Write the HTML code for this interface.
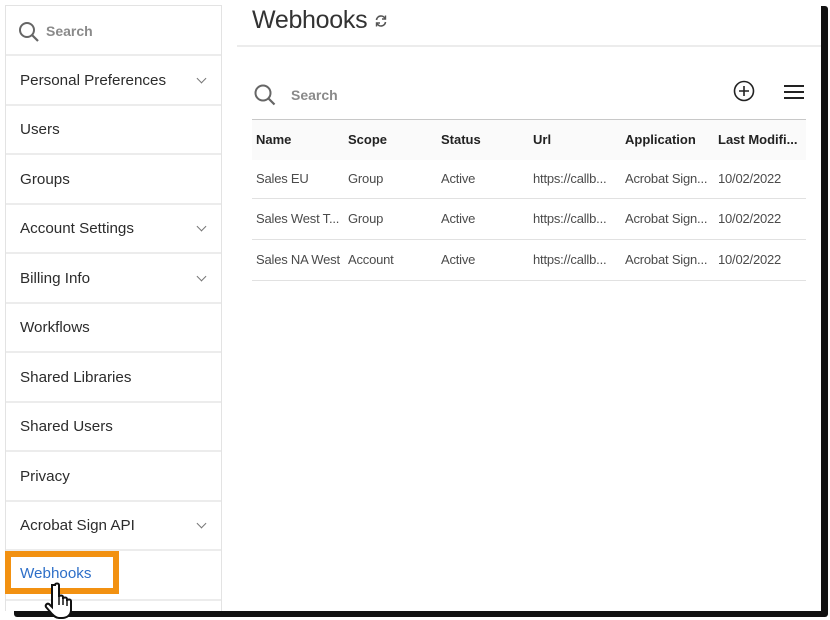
<!DOCTYPE html>
<html><head><style>
*{margin:0;padding:0;box-sizing:border-box}
body{width:830px;height:620px;background:#fff;position:relative;overflow:hidden;font-family:"Liberation Sans",sans-serif;color:#2c2c2c}
.shadowR{position:absolute;left:820px;top:6px;width:8px;height:608px;background:#111;border-radius:0 3px 3px 0}
.shadowB{position:absolute;left:14px;top:609px;width:814px;height:8px;background:#111;border-radius:0 0 3px 3px}
.frame{position:absolute;left:0;top:0;width:821px;height:611px;background:#fff}
.side{position:absolute;left:5px;top:5px;width:217px;height:606px;border:1px solid #e3e3e3;border-bottom:none}
.item{position:absolute;left:0;width:215px;height:50px;border-bottom:2px solid #ececec;font-size:15.2px;padding-left:14px;line-height:50px;color:#2c2c2c}
.chev{position:absolute;right:16px;top:19px;width:7px;height:7px;border-right:1.5px solid #777;border-bottom:1.5px solid #777;transform:rotate(45deg)}
.th{position:absolute;top:132px;font-size:13px;font-weight:bold;color:#222}
.td{position:absolute;font-size:13px;color:#4b4b4b;letter-spacing:-0.2px}
.hl{position:absolute;left:252px;width:554px;height:1px;background:#e1e1e1}
</style></head><body>
<div class="shadowR"></div><div class="shadowB"></div>
<div class="frame">
<div class="side">
<div class="item" style="top:0;height:50px;color:#8a8a8a;font-weight:bold;padding-left:40px;font-size:14px">Search
<svg style="position:absolute;left:12px;top:15px" width="22" height="22" viewBox="0 0 22 22"><circle cx="9" cy="9" r="7" fill="none" stroke="#666" stroke-width="2"/><path d="M14 14l6 6" stroke="#666" stroke-width="2.2"/></svg></div>
<div class="item" style="top:50px">Personal Preferences<span class="chev"></span></div>
<div class="item" style="top:99px">Users</div>
<div class="item" style="top:149px">Groups</div>
<div class="item" style="top:198px">Account Settings<span class="chev"></span></div>
<div class="item" style="top:248px">Billing Info<span class="chev"></span></div>
<div class="item" style="top:297px">Workflows</div>
<div class="item" style="top:347px">Shared Libraries</div>
<div class="item" style="top:396px">Shared Users</div>
<div class="item" style="top:446px">Privacy</div>
<div class="item" style="top:495px">Acrobat Sign API<span class="chev"></span></div>
<div class="item" style="top:545px"></div>
</div>
<div style="position:absolute;left:5px;top:551px;width:114px;height:43px;border:6px solid #f29111;background:#fff;color:#2e6fc8;font-size:15.2px;padding-left:9px;line-height:34px">Webhooks</div>
<svg style="position:absolute;left:42px;top:582px" width="40" height="38" viewBox="0 0 40 38"><path d="M13 3c0-2 4-2 4 0v12c0-2 4-2 4 0v2c0-2 4-2 4 0v2c0-2 4-2 4 0v9c0 5-4 8-9 8h-3c-3 0-5-2-7-4l-6-7c-1-2 1-4 3-3l3 3V3z" fill="#fff" stroke="#111" stroke-width="2"/><path d="M17 15v8M21 17v6M25 19v5" stroke="#111" stroke-width="1.5"/></svg>
<div style="position:absolute;left:252px;top:6px;font-size:25px;color:#333;letter-spacing:-0.3px">Webhooks</div>
<svg style="position:absolute;left:374px;top:14px" width="14" height="14" viewBox="0 0 14 14"><path d="M2.5 6a4.5 4.5 0 0 1 8.5-1.5M11.5 8a4.5 4.5 0 0 1-8.5 1.5" fill="none" stroke="#555" stroke-width="1.6"/><path d="M11.5 1.5v3.5h-3.5M2.5 12.5v-3.5h3.5" fill="none" stroke="#555" stroke-width="1.4"/></svg>
<div style="position:absolute;left:237px;top:45px;width:584px;height:2px;background:#ececec"></div>
<svg style="position:absolute;left:254px;top:84px" width="22" height="22" viewBox="0 0 22 22"><circle cx="9" cy="9" r="7.5" fill="none" stroke="#666" stroke-width="2"/><path d="M14.5 14.5l6 6" stroke="#666" stroke-width="2.2"/></svg>
<div style="position:absolute;left:291px;top:87px;font-size:14px;font-weight:bold;color:#8a8a8a">Search</div>
<svg style="position:absolute;left:733px;top:80px" width="22" height="22" viewBox="0 0 22 22"><circle cx="11" cy="11" r="9.5" fill="none" stroke="#222" stroke-width="1.6"/><path d="M11 6v10M6 11h10" stroke="#222" stroke-width="1.6"/></svg>
<svg style="position:absolute;left:784px;top:84px" width="21" height="16" viewBox="0 0 21 16"><path d="M0 2h20M0 8h20M0 14h20" stroke="#222" stroke-width="2"/></svg>
<div class="hl" style="top:119px;background:#c8c8c8"></div>
<div style="position:absolute;left:252px;top:120px;width:554px;height:40px;background:#fafafa"></div>
<div class="th" style="left:256px">Name</div><div class="th" style="left:348px">Scope</div><div class="th" style="left:441px">Status</div><div class="th" style="left:533px">Url</div><div class="th" style="left:625px">Application</div><div class="th" style="left:718px">Last Modifi...</div>
<div class="td" style="left:256px;top:171px">Sales EU</div><div class="td" style="left:348px;top:171px">Group</div><div class="td" style="left:441px;top:171px">Active</div><div class="td" style="left:533px;top:171px">https://callb...</div><div class="td" style="left:625px;top:171px">Acrobat Sign...</div><div class="td" style="left:718px;top:171px">10/02/2022</div>
<div class="hl" style="top:198px"></div>
<div class="td" style="left:256px;top:211px">Sales West T...</div><div class="td" style="left:348px;top:211px">Group</div><div class="td" style="left:441px;top:211px">Active</div><div class="td" style="left:533px;top:211px">https://callb...</div><div class="td" style="left:625px;top:211px">Acrobat Sign...</div><div class="td" style="left:718px;top:211px">10/02/2022</div>
<div class="hl" style="top:239px"></div>
<div class="td" style="left:256px;top:252px">Sales NA West</div><div class="td" style="left:348px;top:252px">Account</div><div class="td" style="left:441px;top:252px">Active</div><div class="td" style="left:533px;top:252px">https://callb...</div><div class="td" style="left:625px;top:252px">Acrobat Sign...</div><div class="td" style="left:718px;top:252px">10/02/2022</div>
<div class="hl" style="top:280px"></div>
</div>
</body></html>
